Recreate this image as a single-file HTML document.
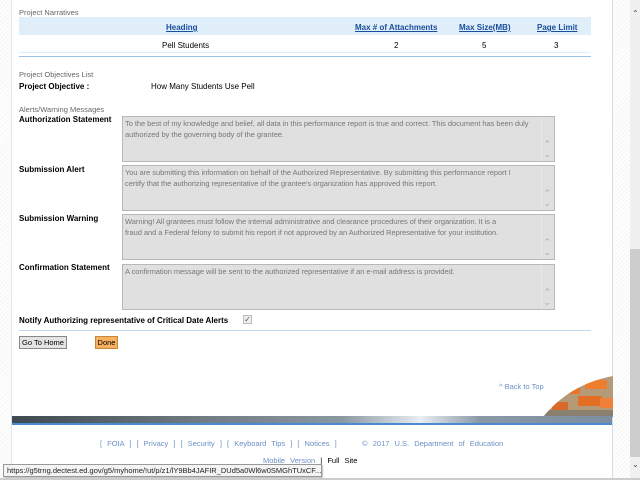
<!DOCTYPE html>
<html><head><style>
*{margin:0;padding:0;box-sizing:border-box}
body{width:640px;height:480px;overflow:hidden;position:relative;font-family:"Liberation Sans",sans-serif;font-size:8px;color:#000;background:repeating-linear-gradient(135deg,#f4f4f4 0 1px,#fff 1px 3px)}
.panel{position:absolute;left:11px;top:0;width:602px;height:480px;background:#fff;border-left:1px solid #dde6f0;border-right:1px solid #cfdcec}
.abs{position:absolute;white-space:nowrap}
.g{color:#666}
.b{font-weight:bold}
a,.lnk{color:#1a4e9c;text-decoration:underline;font-weight:bold}
.ta{position:absolute;left:122px;width:433px;height:46px;background:#e0e0e0;border:1px solid #b8b8b8;color:#777;padding:2px 12px 0 2px;line-height:10.5px;font-size:7.5px;letter-spacing:-0.05px}
.ta:after{content:"";position:absolute;right:0;top:0;width:12px;height:100%;background:#e0e0e0;border-left:1px solid #e8e8e8}
.ar{position:absolute;right:3px;color:#aaa;font-size:9px;z-index:2}
.sb{position:absolute;left:630px;top:0;width:10px;height:480px;background:#f0f0f0}
.btn{position:absolute;top:336px;height:13px;border:1px solid #888;font-size:7.5px;text-align:center;line-height:11px}
.ft{color:#6b8fc4;font-size:7.5px;word-spacing:3px}
</style></head><body>
<div class="panel"></div>
<div class="sb"><div style="position:absolute;top:249px;left:0;width:10px;height:208px;background:#cdcdcd"></div>
<div class="abs" style="left:2px;top:9px;font-size:8px;color:#444">&#8963;</div>
<div class="abs" style="left:2px;top:460px;font-size:8px;color:#444">&#8964;</div></div>

<div class="abs g" style="left:19px;top:8px;font-size:7.5px">Project Narratives</div>
<div class="abs" style="left:19px;top:17px;width:572px;height:18px;background:#dfeef8"></div>
<div class="abs lnk" style="left:166px;top:23px">Heading</div>
<div class="abs lnk" style="left:355px;top:23px">Max # of Attachments</div>
<div class="abs lnk" style="left:459px;top:23px">Max Size(MB)</div>
<div class="abs lnk" style="left:537px;top:23px">Page Limit</div>
<div class="abs" style="left:162px;top:41px">Pell Students</div>
<div class="abs" style="left:394px;top:41px">2</div>
<div class="abs" style="left:482px;top:41px">5</div>
<div class="abs" style="left:554px;top:41px">3</div>
<div class="abs" style="left:19px;top:52px;width:572px;height:1px;background:#dfeef8"></div>
<div class="abs" style="left:19px;top:56px;width:572px;height:1px;background:#9cc3e6"></div>

<div class="abs g" style="left:19px;top:70px;font-size:7.5px">Project Objectives List</div>
<div class="abs b" style="left:19px;top:82px">Project Objective :</div>
<div class="abs" style="left:151px;top:82px">How Many Students Use Pell</div>
<div class="abs g" style="left:19px;top:105px;font-size:7.5px">Alerts/Warning Messages</div>

<div class="abs b" style="left:19px;top:115px">Authorization Statement</div>
<div class="ta" style="top:116px">To the best of my knowledge and belief, all data in this performance report is true and correct. This document has been duly authorized by the governing body of the grantee.<span class="ar" style="top:22px">&#8963;</span><span class="ar" style="top:32px">&#8964;</span></div>
<div class="abs b" style="left:19px;top:165px">Submission Alert</div>
<div class="ta" style="top:165px">You are submitting this information on behalf of the Authorized Representative. By submitting this performance report I<br>certify that the authorizing representative of the grantee's organization has approved this report.<span class="ar" style="top:22px">&#8963;</span><span class="ar" style="top:32px">&#8964;</span></div>
<div class="abs b" style="left:19px;top:214px">Submission Warning</div>
<div class="ta" style="top:214px">Warning! All grantees must follow the internal administrative and clearance procedures of their organization. It is a<br>fraud and a Federal felony to submit his report if not approved by an Authorized Representative for your institution.<span class="ar" style="top:22px">&#8963;</span><span class="ar" style="top:32px">&#8964;</span></div>
<div class="abs b" style="left:19px;top:263px">Confirmation Statement</div>
<div class="ta" style="top:264px">A confirmation message will be sent to the authorized representative if an e-mail address is provided.<span class="ar" style="top:22px">&#8963;</span><span class="ar" style="top:32px">&#8964;</span></div>

<div class="abs b" style="left:19px;top:316px">Notify Authorizing representative of Critical Date Alerts</div>
<div class="abs" style="left:243px;top:315px;width:9px;height:9px;border:1px solid #bbb;background:#eee;font-size:8px;line-height:7px;color:#555;text-align:center">&#10003;</div>
<div class="abs" style="left:19px;top:330px;width:572px;height:1px;background:#c3d9f0"></div>
<div class="btn" style="left:19px;width:48px;background:#e4e4e4">Go To Home</div>
<div class="btn" style="left:95px;width:23px;background:#f5b060;border-color:#c88838">Done</div>

<div class="abs ft" style="left:499px;top:382px;word-spacing:0">^ Back to Top</div>
<svg class="abs" style="left:540px;top:376px" width="73" height="41"><defs><clipPath id="c"><path d="M3 41 Q30 8 73 0 L73 41Z"/></clipPath></defs><g clip-path="url(#c)"><rect width="73" height="41" fill="#b49a76"/><rect x="20" y="10" width="20" height="8" fill="#e8742a"/><rect x="45" y="4" width="22" height="9" fill="#ef7d2e"/><rect x="38" y="20" width="24" height="10" fill="#e36f24"/><rect x="12" y="26" width="16" height="8" fill="#d8692a"/><rect x="60" y="22" width="13" height="10" fill="#f08038"/><rect x="0" y="34" width="73" height="7" fill="#8a8070"/></g></svg>
<div class="abs" style="left:12px;top:416px;width:600px;height:7px;background:linear-gradient(90deg,#3e4a52,#6e7a82 30%,#8a98a2 55%,#e8eef2 68%,#8a98a6 78%,#7c8ea0)"></div>
<div class="abs" style="left:12px;top:423px;width:600px;height:2px;background:#4a8ad0"></div>

<div class="abs ft" style="left:100px;top:439px">[ FOIA ] [ Privacy ] [ Security ] [ Keyboard Tips ] [ Notices ] &nbsp; &nbsp; © 2017 U.S. Department of Education</div>
<div class="abs ft" style="left:263px;top:456px">Mobile Version <span style="color:#000">| Full Site</span></div>
<div class="abs" style="left:3px;top:464px;width:319px;height:13px;background:#f4f4f4;border:1px solid #999;font-size:7.5px;line-height:11px;padding-left:3px;color:#222;box-shadow:1px 1px 1px #bbb">https://g5trng.dectest.ed.gov/g5/myhome/!ut/p/z1/lY9Bb4JAFIR_DUd5a0Wl6w0SMGhTUxCF...</div>
<div class="abs" style="left:0;top:478px;width:640px;height:2px;background:#ccc"></div>
</body></html>
